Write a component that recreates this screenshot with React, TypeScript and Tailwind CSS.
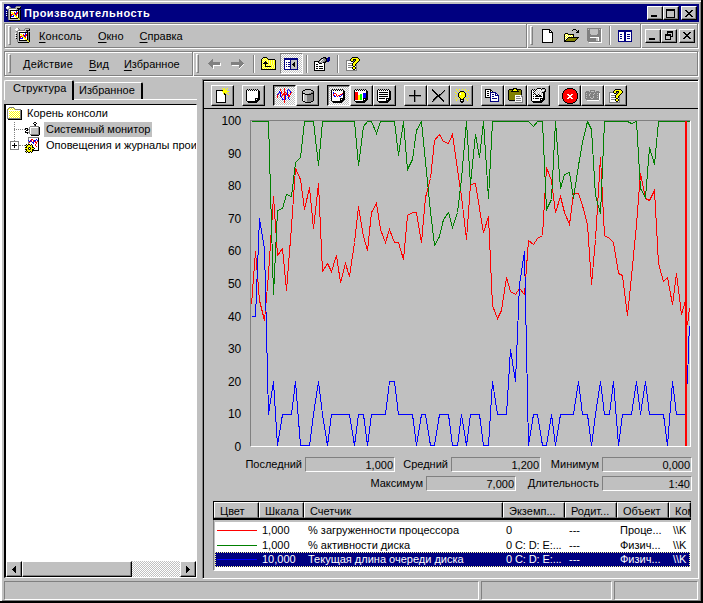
import type { ReactNode } from "react";

const colors: Record<string, string> = {
  K: "#000000",
  W: "#ffffff",
  L: "#c0c0c0",
  G: "#808080",
  Y: "#ffff00",
  y: "#ffff99",
  O: "#808000",
  R: "#ff0000",
  B: "#0000ff",
  N: "#000080",
  E: "#00ff00",
};

// 16-colour bitmap icons, one character per pixel
const icons = {
  console: [
    ".WWG......GGGGG",
    "WWWLG....GLLLLK",
    "LWLGGGGGGGLKKKK",
    ".GGWWWWWWWLGK..",
    "..GLKKKKKKKKKGK",
    "W.GLKWWWWWBWKGK",
    ".KGLKYYWRWBRKGK",
    "W.GLKWYYRBRRKGK",
    ".KGLKRRYYBRWKGK",
    "W.GLKRWBYYRWKGK",
    ".KGLKBBBWYYWKGK",
    "..GLKWWWWWYYKGK",
    "..GLKKKKKKKKYGK",
    "..GLLLLLLLLLLYK",
    "...KKKKKKKKKKK.",
  ],
  monitor: [
    ".........KK.....",
    "........KWWK....",
    ".........KK.....",
    ".........GK.....",
    ".....GGGGGGGGG..",
    "....GWWWWWWWWGK.",
    "KKK.GWLLLLLLLGK.",
    "K.KGGWLLLLLLLGK.",
    ".KK.GWLLLLLLLGK.",
    "K...GWLLLLLLLGK.",
    "KKKGGWLLLLLLLGK.",
    "..K.GWLLLLLLLGK.",
    ".....GGGGGGGGGK.",
    "......KKKKKKKK..",
  ],
  alerts: [
    "...GGGGGGGGGGG",
    "...GWWWWWWWWWK",
    "...GWWRRWWWBWK",
    "...BWBRWRBBWBK",
    "...GBRBWRBRWRK",
    "...GRWWBBWRRWK",
    "...GWWWWBWWRWK",
    ".K.KKWKWWWRWWK",
    "KYKYYKYKWWRWWK",
    ".KYYYYYKWWWRWK",
    "KKYOKOYKKWWWWK",
    "YYYKWKYYYKWWWK",
    "KKYOKOYKKWWWWK",
    ".KYYYYYKKKKKKK",
    "KYKYYKYK......",
    ".K.KK.K.......",
  ],
  folder: [
    "..GGGGG........",
    ".GYWYWYG.......",
    "GYWYWYWYGGGGGG.",
    "GWWWWWWWWWWWWGK",
    "GWYWYWYWYWYWYGK",
    "GWWYWYWYWYWYWGK",
    "GWYWYWYWYWYWYGK",
    "GWWYWYWYWYWYWGK",
    "GWYWYWYWYWYWYGK",
    "GWWYWYWYWYWYWGK",
    "GWYWYWYWYWYWYGK",
    "GGGGGGGGGGGGGGK",
    ".KKKKKKKKKKKKKK",
  ],
  blank: [
    "KKKKKKKK...",
    "KWWWWWWKK..",
    "KWWWWWWKWK.",
    "KWWWWWWKKKK",
    "KWWWWWWWWWK",
    "KWWWWWWWWWK",
    "KWWWWWWWWWK",
    "KWWWWWWWWWK",
    "KWWWWWWWWWK",
    "KWWWWWWWWWK",
    "KWWWWWWWWWK",
    "KWWWWWWWWWK",
    "KWWWWWWWWWK",
    "KKKKKKKKKKK",
  ],
  open: [
    ".........KKK...",
    "........K...K.K",
    ".............KK",
    "............KKK",
    ".KKK...........",
    "KYWYKKKKKK.....",
    "KWYWYWYWYK.....",
    "KYWYWYWYWK.....",
    "KWYWKKKKKKKKKKK",
    "KYWKOOOOOOOOOK.",
    "KWKOOOOOOOOOK..",
    "KKOOOOOOOOOK...",
    "KKKKKKKKKKK....",
  ],
  save: [
    "GGGGGGGGGGGGGG.",
    "GLGLLLLLLLLGLGW",
    "GGGLLLLLLLLGGGW",
    "GGGLLLLLLLLGGGW",
    "GGGLLLLLLLLGGGW",
    "GGGLLLLLLLLGGGW",
    "GGGGLLLLLLGGGGW",
    "GGGGGGGGGGGGGGW",
    "GGGGGGGGGGGGGGW",
    "GGGWWWWWWWWWGGW",
    "GGGGGGGGGLLWGGW",
    "GGGGGGGGGLLWGGW",
    "GGGGGGGGGLLWGGW",
    ".GGGGGGGGGGGGGW",
    "..WWWWWWWWWWWWW",
  ],
  tree: [
    "NNNNNNNNNNNNNN",
    "NNNNNNNNNNNNNN",
    "NWWWWWNNWWWWWN",
    "NWWWWWNNWWWWWN",
    "NWNNWWNNWNNNWN",
    "NWWWWWNNWWWWWN",
    "NWNNWWNNWNNNWN",
    "NWWWWWNNWWWWWN",
    "NWNNWWNNWNNNWN",
    "NWWWWWNNWWWWWN",
    "NWWWWWNNWWWWWN",
    "NNNNNNNNNNNNNN",
  ],
  back: [
    "....G........",
    "...GG........",
    "..GGG........",
    ".GGGGGGGGGGG.",
    "GGGGGGGGGGGGW",
    ".GGGGGGGGGGGW",
    "..GGGWWWWWWWW",
    "...GGW.......",
    "....GW.......",
    ".....W.......",
  ],
  forward: [
    "........G....",
    "........GG...",
    "........GGG..",
    "GGGGGGGGGGGG.",
    "GGGGGGGGGGGGG",
    "GGGGGGGGGGGGW",
    ".WWWWWWWGGGW.",
    "........GGW..",
    "........GW...",
    "........W....",
  ],
  up: [
    "..KKKK.........",
    ".KyYyYK........",
    "KyYyYyYKKKKKKK.",
    "KYyYyYyYyYyYyYK",
    "KyYyKYyYyYyYyYK",
    "KYyKKKyYyYyYyYK",
    "KyKKKKKYyYyYyYK",
    "KYyYKYyYyYyYyYK",
    "KyYyKyYyYyYyYyK",
    "KYyYKKKKKKYyYyK",
    "KyYyYyYyYyYyYyK",
    "KYyYyYyYyYyYyYK",
    "KKKKKKKKKKKKKKK",
  ],
  toggle: [
    "NNNNNNNNNNNNNN",
    "NNNNNNNNNNNNNN",
    "NWWWWWNLLLLLLN",
    "NWWWWWNLLLLLLN",
    "NWNWNNNLLLKLLN",
    "NWWWWWNLLKKLLN",
    "NWNWNNNLKKKLLN",
    "NWWWWWNLLKKLLN",
    "NWNWNNNLLLKLLN",
    "NWWWWWNLLLLLLN",
    "NWWWWWNLLLLLLN",
    "NNNNNNNNNNNNNN",
  ],
  props: [
    ".........KKK..NN",
    ".......KKGGKKNNN",
    "......KGWGGGKBNN",
    ".....KGWGLGGKNNN",
    "KKKKKGWGLGGKKNN.",
    "KWWWKGGLGKKK....",
    "KWWWWKKKWWK.....",
    "KWKKWWWWWWK.....",
    "KWWWWWWWWWK.....",
    "KWKKWKKKKWK.....",
    "KWWWWWWWWWK.....",
    "KWKKWKKKKWK.....",
    "KWWWWWWWWWK.....",
    "KKKKKKKKKKK.....",
  ],
  help: [
    "......KKKKKK..",
    ".....KYYYYYYK.",
    "....KYYKKKYYYK",
    "GGGGKYYKGKYYYK",
    "GWWWWKKGKYYYK.",
    "GWWWWWWKYYYK..",
    "GWGGGGKYYYK...",
    "GWWWWWKYYKG...",
    "GWGGGGKYYKG...",
    "GWWWWWWKKWG...",
    "GWGGGGKYYKG...",
    "GWWWWWKYYKG...",
    "GWWWWWWKKWG...",
    "GGGGGGGGGGG...",
  ],
  newSet: [
    "......Y.Y..Y.",
    ".......YY.Y..",
    "KKKKKKKYYYY..",
    "KWWWWWYYYYYYY",
    "KWWWWWWYYYY..",
    "KWWWWWWYKY.Y.",
    "KWWWWWWWKK..Y",
    "KWWWWWWWWK...",
    "KWWWWWWWWK...",
    "KWWWWWWWWK...",
    "KWWWWWWWWK...",
    "KWWWWWWWWK...",
    "KWWWWWWWWK...",
    "KWWWWWWWWK...",
    "KKKKKKKKKK...",
  ],
  clear: [
    ".K.K.K.K.K.K...",
    "KWKWKWKWKWKWK..",
    "KWWWWWWWWWWWKK.",
    "KWWWWWWWWWWWKK.",
    "KWWWWWWWWWWWKK.",
    "KWWWWWWWWWWWKK.",
    "KWWWWWWWWWWWKK.",
    "KWWWWWWWWWWWKK.",
    "KWWWWWWWWWWWKK.",
    "KWWWWWWWWKKKKK.",
    "KWWWWWWWWKWKKK.",
    "KWWWWWWWWKKKK..",
    ".KKKKKKKKKKK...",
    "..KKKKKKKKK....",
  ],
  current: [
    ".......R.......",
    "...R...R...B...",
    "...R...R..B.B..",
    "..B.R..R..B..B.",
    "..BBR..RR.B..BR",
    ".B.BR.RR.RB..R.",
    "BR.B.RRRRRBR.R.",
    "R..B.R.RB.BRR..",
    "R..BR..RB..RR..",
    "R...B..RB..B...",
    ".....B.RB..B...",
    ".....BBRB...B..",
    ".......R.......",
    ".......R.......",
    ".......R.......",
  ],
  logData: [
    "...KKKKKK...",
    ".KKLLLLLLKK.",
    "KLLLLLLLLLGK",
    "KLLLLLLLLGGK",
    "KKKLLLLGGKKK",
    "KWLKKKKKKGGK",
    "KWLLLGGGGGGK",
    "KWLLLGGGGGGK",
    "KWLLLGGGGGGK",
    "KWLLLGGGGGGK",
    "KWLLLGGGGGGK",
    "KWLLLGGGGGGK",
    ".KKLLGGGGKK.",
    "...KKKKKK...",
  ],
  graph: [
    ".K.K.K.K.K.K...",
    "KWKWKWKWKWKWK..",
    "KWWWWWWWWWWWKK.",
    "KWBWWWWWWWWWKK.",
    "KWBRRWWWWWWRKK.",
    "KWRWWRWWWRRBKK.",
    "KWRBWRWRRWBWKK.",
    "KWWBBWRWBBWWKK.",
    "KWWWWWWWWWWWKK.",
    "KWWWWWWWWKKKKK.",
    "KWWWWWWWWKWKKK.",
    "KWWWWWWWWKKKK..",
    ".KKKKKKKKKKK...",
    "..KKKKKKKKK....",
  ],
  histogram: [
    ".K.K.K.K.K.K...",
    "KWKWKWKWKWKWK..",
    "KWWWWWWWWWWWKK.",
    "KRRRWWWWWWWWKK.",
    "KRRRWWWWWBBBKK.",
    "KRRRWWEEWBBBKK.",
    "KRRRYYEEWBBBKK.",
    "KRRRYYEEWBBBKK.",
    "KRRRYYEEWBBBKK.",
    "KRRRYYEEWKKKKK.",
    "KRRRYYEEWKWKKK.",
    "KWWWWWWWWKKKK..",
    ".KKKKKKKKKKK...",
    "..KKKKKKKKK....",
  ],
  report: [
    ".K.K.K.K.K.K...",
    "KWKWKWKWKWKWK..",
    "KWWWWWWWWWWWKK.",
    "KWKKKKKKKKKWKK.",
    "KWWWWWWWWWWWKK.",
    "KWKKKKKKKKKWKK.",
    "KWWWWWWWWWWWKK.",
    "KWKKKKKKKKKWKK.",
    "KWWWWWWWWWWWKK.",
    "KWKKKKKKWKKKKK.",
    "KWWWWWWWWKWKKK.",
    "KWWWWWWWWKKKK..",
    ".KKKKKKKKKKK...",
    "..KKKKKKKKK....",
  ],
  add: [
    ".....KG......",
    ".....KG......",
    ".....KG......",
    ".....KG......",
    ".....KG......",
    "KKKKKKKKKKKK.",
    "GGGGGKGGGGGG.",
    ".....KG......",
    ".....KG......",
    ".....KG......",
    ".....KG......",
    ".....KG......",
  ],
  remove: [
    "K............",
    "KK..........K",
    ".KK........KG",
    "..KK......KG.",
    "...KK....KG..",
    "....KK.KKG...",
    ".....KKKG....",
    "....KKKK.....",
    "...KKG.KK....",
    "..KKG...KK...",
    ".KKG.....KK..",
    ".KG.......KK.",
    "KG.........K.",
  ],
  highlight: [
    ".Y..Y..Y..Y...",
    "..Y.......Y..Y",
    "...Y.KKKK..Y..",
    "Y...KYYYYK....",
    ".Y.KYWYYYYK.Y.",
    "...KYWYYYYK..Y",
    "Y..KYYYYYYK...",
    "...KYYYYYYK.Y.",
    ".Y..KYYYYK....",
    "Y...YKYYK.Y..Y",
    "..Y..KKKK..Y..",
    ".Y...KWLK...Y.",
    ".....KKKK.....",
    "......KK......",
  ],
  copy: [
    "KKKKKK.........",
    "KWWWWKK........",
    "KWKKWKWK.......",
    "KWWWWNNNNNN....",
    "KWKKWNWWWWNN...",
    "KWWWWNWNNWNWN..",
    "KWKKWNWWWWNNNN.",
    "KWWWWNWNNWWWWN.",
    "KKKKKNWWWWWWWN.",
    ".....NWNNNNNWN.",
    ".....NWWWWWWWN.",
    ".....NWWWWWWWN.",
    ".....NNNNNNNNN.",
  ],
  paste: [
    ".....KKKK......",
    ".KKKKKYYKKKKK..",
    "KOOOKYYYYKOOOK.",
    "KOOKKKKKKKKOOK.",
    "KOOOOOOOOOOOOK.",
    "KOOOOOOOOOOOOK.",
    "KOOOOOOOOOOOOK.",
    "KOOOOOOWWWWWWG.",
    "KOOOOOOWGGGGWGG",
    "KOOOOOOWWWWWWWG",
    "KOOOOOOWGGGGGWG",
    "KOOOOOOWWWWWWWG",
    ".KKKKKKWGGGGGWG",
    ".......WWWWWWWG",
    ".......GGGGGGGG",
  ],
  properties: [
    "......KKKK.KKK.",
    ".K.K.KWWWWKLLLK",
    "KWKWKWLWLWLWWLK",
    "KWWKWLWLWLWLLKK",
    "KWKWLWLWLWLKKK.",
    "KWWKLWLWLWLWKK.",
    "KWKWKLWKLWLWKK.",
    "KWWWWKKWKKWWKK.",
    "KWKWKKKKKKKWKK.",
    "KWWWWWWWWWWWKK.",
    "KWKWKKKKWKKKKK.",
    "KWWWWWWWWKWKKK.",
    "KWWWWWWWWKKKK..",
    ".KKKKKKKKKKK...",
    "..KKKKKKKKK....",
  ],
  stop: [
    ".....KKKKKK.....",
    "...KKRRRRRRKK...",
    "..KRRRRRRRRRRK..",
    ".KRRRRRRRRRRRRK.",
    ".KRRRRRRRRRRRRK.",
    "KRRRRRRRRRRRRRRK",
    "KRRRRWWRRWWRRRRK",
    "KRRRRRWWWWRRRRRK",
    "KRRRRRRWWRRRRRRK",
    "KRRRRRWWWWRRRRRK",
    "KRRRRWWRRWWRRRRK",
    ".KRRRRRRRRRRRRK.",
    ".KRRRRRRRRRRRRK.",
    "..KRRRRRRRRRRK..",
    "...KKRRRRRRKK...",
    ".....KKKKKK.....",
  ],
  camera: [
    ".....GGGGG.....",
    ".GGG.GLLLG.GGG.",
    "GGGGGGGGGGGGGGG",
    "GLGGGLGGGLGGLGW",
    "GGGGLGGGLGGGGGW",
    "GLGGLGGGGGGGLGW",
    "GGGGGGGGLGGGGGW",
    "GLGGGLGGLGGGLGW",
    "GGGGGGLLGGGGGGW",
    ".GGGGGGGGGGGGGW",
    "..WWWWWWWWWWWW.",
  ],
  minimize: [".......", ".......", ".......", ".......", ".......", ".......", "KKKKKK.", "KKKKKK."],
  maximize: [
    "KKKKKKKKK",
    "KKKKKKKKK",
    "K.......K",
    "K.......K",
    "K.......K",
    "K.......K",
    "K.......K",
    "K.......K",
    "KKKKKKKKK",
  ],
  restore: [
    "..KKKKKK",
    "..KKKKKK",
    "..K....K",
    "KKKKKK.K",
    "KKKKKK.K",
    "K....KKK",
    "K....K..",
    "K....K..",
    "KKKKKK..",
  ],
  close: [
    "KK....KK",
    ".KK..KK.",
    "..KKKK..",
    "...KK...",
    "..KKKK..",
    ".KK..KK.",
    "KK....KK",
  ],
  left: ["...K", "..KK", ".KKK", "KKKK", ".KKK", "..KK", "...K"],
  right: ["K...", "KK..", "KKK.", "KKKK", "KKK.", "KK..", "K..."],
  plus: [
    "GGGGGGGGG",
    "GWWWWWWWG",
    "GWWWKWWWG",
    "GWWWKWWWG",
    "GWKKKKKWG",
    "GWWWKWWWG",
    "GWWWKWWWG",
    "GWWWWWWWG",
    "GGGGGGGGG",
  ],
};

type IconName = keyof typeof icons;

function Icon({ name, className = "" }: { name: IconName; className?: string }) {
  const rows = icons[name];
  const width = rows[0].length;
  return (
    <svg
      width={width}
      height={rows.length}
      viewBox={`0 0 ${width} ${rows.length}`}
      shapeRendering="crispEdges"
      className={`shrink-0 ${className}`}
    >
      {rows.flatMap((row, y) =>
        [...row].map((c, x) =>
          c === "." ? null : <rect key={`${x}-${y}`} x={x} y={y} width={1} height={1} fill={colors[c]} />
        )
      )}
    </svg>
  );
}

const red = [
  43.7, 60, 45, 38.7, 53, 76.8, 58.6, 60.9, 47.9, 67.6, 85.4, 82.1, 72.9, 79.6, 66.9, 80.9, 53.8, 56.2, 53.8, 58.8,
  50.4, 56.2, 52.3, 62.8, 73.7, 64.5, 60.3, 72, 74.7, 66.6, 62.8, 66.8, 62.8, 62.7, 57.6, 70.9, 71.9, 71.9, 62.8, 76.6,
  82.4, 94, 95.9, 93.7, 93, 95.9, 85, 76.8, 63.5, 80.4, 80.8, 73.2, 65.9, 70.7, 43.3, 39.4, 42, 52.1, 47.8, 46.8,
  48.6, 46.9, 63.3, 62, 64, 64.9, 85.8, 81.9, 71.9, 76.8, 71.9, 68.1, 77.8, 77.8, 74, 68.1, 49.9, 63.5, 88.9, 64.9,
  64.1, 62.8, 53.1, 52.5, 40.2, 52.3, 68.1, 84, 76.2, 75.7, 78.7, 56.4, 50.8, 52, 43.7, 53.1, 40.5, 45,
];

const green = [
  100, 100, 100, 100, 100, 46.8, 72.5, 73.2, 77.5, 76.8, 87.4, 88.8, 100, 100, 100, 86.2, 100, 100, 100, 100,
  100, 100, 100, 100, 86.4, 98.3, 100, 100, 96.2, 100, 100, 100, 100, 89.5, 100, 85.2, 88.3, 97, 100, 87.6,
  72.2, 61.7, 64.7, 69.9, 71.9, 67.4, 71.9, 82.4, 100, 80.4, 96, 88.9, 100, 76.3, 100, 100, 100, 100, 100, 100,
  100, 100, 100, 98.2, 100, 100, 72.7, 75.8, 100, 79.4, 83.6, 84.3, 76.3, 86.2, 93.4, 100, 97.3, 77.3, 71.7, 100,
  100, 100, 100, 100, 100, 99.3, 100, 79.4, 76.5, 91.8, 86.7, 100, 100, 100, 100, 100, 100, 100, 100,
];

const blue = [
  40, 40, 70, 61, 10, 20, 0, 10, 10, 10, 20, 0, 0, 0, 10, 20, 10, 0, 10, 10,
  10, 10, 10, 0, 10, 10, 0, 10, 10, 10, 10, 20, 20, 10, 10, 10, 10, 0, 10, 10,
  0, 0, 10, 10, 10, 0, 0, 10, 0, 10, 10, 10, 0, 0, 20, 10, 10, 10, 30, 20,
  50, 60, 0, 10, 10, 0, 0, 10, 0, 10, 10, 10, 10, 20, 10, 10, 0, 10, 20, 10,
  10, 20, 0, 10, 10, 10, 20, 10, 20, 10, 10, 10, 10, 0, 20, 10, 10, 10,
];

const toPoints = (values: number[]) =>
  values
    .map((v, i) => `${Math.floor(i * 4.48) + 0.5},${Math.min(324, Math.floor(326 - v * 3.26)) + 0.5}`)
    .join(" ");

function Chart() {
  return (
    <div className="flex h-[344px] pt-[7px]">
      <div className="relative -top-[4px] mr-[9px] flex h-[336px] w-[37px] flex-col justify-between text-right text-[12px] leading-[10px] tracking-[-0.2px]">
        {[100, 90, 80, 70, 60, 50, 40, 30, 20, 10, 0].map((n) => (
          <span key={n}>{n}</span>
        ))}
      </div>
      <div className="h-[327px] w-[441px] border border-t-[#808080] border-r-white border-b-white border-l-[#808080]">
        <svg width="439" height="325" shapeRendering="crispEdges" fill="none" className="block">
          <polyline points={toPoints(red)} stroke="#ff0000" />
          <polyline points="436.5,204.5 438.5,187" stroke="#ff0000" />
          <polyline points={toPoints(green)} stroke="#008000" />
          <polyline points={toPoints(blue)} stroke="#0000ff" />
          <polyline points="436.5,263 437.5,225 438.5,205" stroke="#0000ff" />
          <rect x="434" y="0" width="2" height="325" fill="#ff0000" />
        </svg>
      </div>
    </div>
  );
}

function CaptionButton({ icon, className = "" }: { icon: IconName; className?: string }) {
  return (
    <div
      className={`flex h-[14px] w-4 items-center justify-center border border-t-white border-r-black border-b-black border-l-white bg-[#c0c0c0] shadow-[inset_-1px_-1px_0_#808080] ${className}`}
    >
      <Icon name={icon} className="-ml-px" />
    </div>
  );
}

function ToolButton({ icon, pressed = false }: { icon: IconName; pressed?: boolean }) {
  return (
    <div
      className={
        pressed
          ? "flex h-[21px] w-[23px] items-center justify-center border border-t-black border-r-white border-b-white border-l-black bg-[repeating-conic-gradient(#fff_0_25%,#c0c0c0_0_50%)] bg-[length:2px_2px] shadow-[inset_1px_1px_0_#808080]"
          : "flex h-[21px] w-[23px] items-center justify-center border border-t-white border-r-black border-b-black border-l-white shadow-[inset_-1px_-1px_0_#808080]"
      }
    >
      <Icon name={icon} />
    </div>
  );
}

const toolGroups: { icon: IconName; pressed?: boolean }[][] = [
  [{ icon: "newSet" }],
  [{ icon: "clear" }],
  [{ icon: "current", pressed: true }, { icon: "logData" }],
  [{ icon: "graph", pressed: true }, { icon: "histogram" }, { icon: "report" }],
  [{ icon: "add" }, { icon: "remove" }, { icon: "highlight" }],
  [{ icon: "copy" }, { icon: "paste" }, { icon: "properties" }],
  [{ icon: "stop" }, { icon: "camera" }, { icon: "help" }],
];

const Grip = () => (
  <div className="h-[19px] w-[3px] shrink-0 border border-t-white border-r-[#808080] border-b-[#808080] border-l-white" />
);

const Divider = ({ className = "" }: { className?: string }) => (
  <div className={`w-[2px] shrink-0 border-l border-r border-l-[#808080] border-r-white ${className}`} />
);

const MenuItem = ({ children, className = "" }: { children: string; className?: string }) => (
  <span className={`pt-px whitespace-nowrap ${className}`}>
    <u className="underline-offset-2">{children[0]}</u>
    {children.slice(1)}
  </span>
);

function Band({ children, className = "" }: { children: ReactNode; className?: string }) {
  return (
    <div
      className={`mr-px flex h-[25px] items-center border border-[#808080] shadow-[inset_1px_1px_0_#fff,1px_1px_0_#fff] ${className}`}
    >
      {children}
    </div>
  );
}

function Value({ label, value, className = "" }: { label: string; value: string; className?: string }) {
  return (
    <div className={`flex items-center justify-end ${className}`}>
      <span className="mr-[3px] whitespace-nowrap">{label}</span>
      <span className="h-[15px] w-[90px] border border-t-[#808080] border-r-white border-b-white border-l-[#808080] pr-px text-right leading-[14px]">
        {value}
      </span>
    </div>
  );
}

const headers = [
  { label: "Цвет", width: "w-[45px]" },
  { label: "Шкала", width: "w-[45px]" },
  { label: "Счетчик", width: "w-[199px]" },
  { label: "Экземп...", width: "w-[62px]" },
  { label: "Родит...", width: "w-[52px]" },
  { label: "Объект", width: "w-[52px]" },
  { label: "Ком", width: "w-[22px]" },
];

const counters = [
  { line: "bg-[#ff0000]", scale: "1,000", name: "% загруженности процессора", instance: "0", object: "Проце..." },
  { line: "bg-[#008000]", scale: "1,000", name: "% активности диска", instance: "0 C: D: E:...", object: "Физич..." },
  {
    line: "bg-[#0000ff]",
    scale: "10,000",
    name: "Текущая длина очереди диска",
    instance: "0 C: D: E:...",
    object: "Физич...",
    selected: true,
  },
];

function CounterTable() {
  return (
    <div className="ml-[9px] w-[478px]">
      <div className="flex h-[19px] overflow-hidden border-t border-b-2 border-l border-black">
        {headers.map((h) => (
          <div
            key={h.label}
            className={`h-4 shrink-0 overflow-hidden border border-t-white border-r-black border-b-[#808080] border-l-white pl-[5px] leading-[16px] whitespace-nowrap shadow-[inset_-1px_0_0_#808080] ${h.width}`}
          >
            {h.label}
          </div>
        ))}
      </div>
      <div className="h-[51px] overflow-hidden border-r border-b border-l border-r-white border-b-white border-l-[#808080] bg-[#c0c0c0] pt-[2px] pl-px">
        <div className="h-[48px] overflow-hidden bg-white">
          {counters.map((c) => (
            <div
              key={c.name}
              className={`flex h-[15px] items-center whitespace-nowrap ${
                c.selected
                  ? "border border-dotted border-[#ffff99] bg-[#000080] pl-px leading-[17px] text-white"
                  : "pt-[2px] pl-[2px] leading-[15px]"
              }`}
            >
              <span className={`h-px w-[40px] shrink-0 ${c.line}`} />
              <span className="ml-[5px] w-[46px] shrink-0">{c.scale}</span>
              <span className="w-[198px] shrink-0">{c.name}</span>
              <span className="w-[63px] shrink-0 tracking-[-0.1px]">{c.instance}</span>
              <span className="w-[51px] shrink-0">---</span>
              <span className="w-[53px] shrink-0">{c.object}</span>
              <span>\\K</span>
            </div>
          ))}
        </div>
      </div>
    </div>
  );
}

function TreePane() {
  return (
    <div className="w-[193px] shrink-0 pt-px">
      <div className="flex h-[19px] items-end">
        <div className="relative top-px h-[20px] w-[70px] rounded-t-[2px] border-t border-r-2 border-l border-t-white border-r-black border-l-white bg-[#c0c0c0] pl-[8px] leading-[14px] tracking-[0.15px]">
          Структура
        </div>
        <div className="h-[17px] w-[69px] rounded-t-[2px] border-t border-r-2 border-t-white border-r-black pl-[5px] leading-[14px]">
          Избранное
        </div>
      </div>
      <div className="ml-[70px] h-px bg-white" />
      <div className="mt-[4px] flex h-[474px] flex-col justify-between border-t border-r border-b border-l-2 border-t-black border-r-white border-b-white border-l-black bg-white">
        <div className="relative overflow-hidden pl-px whitespace-nowrap">
          <div className="absolute top-[17px] left-[8px] h-[25px] border-l border-dotted border-[#808080]" />
          <div className="flex h-4 items-center">
            <Icon name="folder" />
            <span className="ml-[5px]">Корень консоли</span>
          </div>
          <div className="flex h-4 items-center">
            <div className="ml-[7px] w-[11px] border-t border-dotted border-[#808080]" />
            <Icon name="monitor" />
            <span className="ml-[3px] h-[15px] bg-[#c0c0c0] px-[2px] leading-[15px]">Системный монитор</span>
          </div>
          <div className="flex h-4 items-center">
            <Icon name="plus" className="relative ml-[3px]" />
            <div className="w-[6px] shrink-0 border-t border-dotted border-[#808080]" />
            <Icon name="alerts" />
            <span className="ml-[7px]">Оповещения и журналы прои</span>
          </div>
        </div>
        <div className="flex h-4 bg-[repeating-conic-gradient(#fff_0_25%,#c0c0c0_0_50%)] bg-[length:2px_2px]">
          <div className="flex w-4 items-center justify-center border border-t-white border-r-black border-b-black border-l-white bg-[#c0c0c0] shadow-[inset_-1px_-1px_0_#808080]">
            <Icon name="left" />
          </div>
          <div className="w-[110px] border border-t-white border-r-black border-b-black border-l-white bg-[#c0c0c0] shadow-[inset_-1px_-1px_0_#808080]" />
          <div className="ml-auto flex w-4 items-center justify-center border border-t-white border-r-black border-b-black border-l-white bg-[#c0c0c0] shadow-[inset_-1px_-1px_0_#808080]">
            <Icon name="right" />
          </div>
        </div>
      </div>
    </div>
  );
}

function MonitorPane() {
  return (
    <div className="ml-[5px] h-[500px] w-[497px] overflow-hidden border-t border-r border-b border-l border-t-[#808080] border-r-white border-b-white border-l-[#808080]">
      <div className="h-[498px] border-t border-l border-black">
        <div className="flex h-[28px] gap-[8px] border-t border-b border-t-white border-b-black pt-[3px] pl-[7px]">
          {toolGroups.map((group, i) => (
            <div key={i} className="flex">
              {group.map((tool) => (
                <ToolButton key={tool.icon} {...tool} />
              ))}
            </div>
          ))}
        </div>
        <div className="h-[4px]" />
        <Chart />
        <div className="mr-[6px] flex justify-end">
          <Value label="Последний" value="1,000" />
          <Value label="Средний" value="1,200" className="w-[146px]" />
          <Value label="Минимум" value="0,000" className="w-[151px]" />
        </div>
        <div className="mt-[4px] mr-[6px] flex justify-end">
          <Value label="Максимум" value="7,000" />
          <Value label="Длительность" value="1:40" className="w-[176px]" />
        </div>
        <div className="h-[10px]" />
        <CounterTable />
      </div>
    </div>
  );
}

export default function App() {
  return (
    <div className="h-[603px] w-[703px] overflow-hidden border-r-2 border-b-2 border-black bg-[#c0c0c0] pt-[4px] pl-[4px] font-['Liberation_Sans',Arial,sans-serif] text-[11px] leading-[15px] text-black shadow-[inset_0_1px_0_#c0c0c0,inset_2px_2px_0_#fff,inset_-1px_-1px_0_#808080]">
      <div className="flex h-[18px] w-[695px] items-center bg-[#000080] pr-[2px] pl-[2px]">
        <Icon name="console" />
        <span className="ml-[3px] font-bold tracking-[0.5px] text-white">Производительность</span>
        <CaptionButton icon="minimize" className="ml-auto" />
        <CaptionButton icon="maximize" />
        <CaptionButton icon="close" className="ml-[2px]" />
      </div>

      <Band className="mt-px w-[694px]">
        <div className="w-[3px]" />
        <Grip />
        <Icon name="console" className="ml-[4px]" />
        <MenuItem className="ml-[9px] tracking-[0.1px]">Консоль</MenuItem>
        <MenuItem className="ml-[16px]">Окно</MenuItem>
        <MenuItem className="ml-[16px]">Справка</MenuItem>
        <Divider className="ml-auto h-[24px]" />
        <div className="w-[2px]" />
        <Grip />
        <Icon name="blank" className="ml-[9px]" />
        <Icon name="open" className="ml-[11px]" />
        <Icon name="save" className="ml-[8px]" />
        <Divider className="ml-[7px] h-[19px]" />
        <Icon name="tree" className="ml-[7px]" />
        <Divider className="ml-[8px] h-[24px]" />
        <CaptionButton icon="minimize" className="ml-[3px]" />
        <CaptionButton icon="restore" />
        <CaptionButton icon="close" className="mr-[2px] ml-[2px]" />
      </Band>

      <Band className="mt-[3px] w-[694px]">
        <div className="w-[3px]" />
        <Grip />
        <MenuItem className="ml-[12px] tracking-[0.2px]">Действие</MenuItem>
        <MenuItem className="ml-[16px]">Вид</MenuItem>
        <MenuItem className="ml-[15px]">Избранное</MenuItem>
        <Divider className="ml-[12px] h-[24px]" />
        <div className="w-[2px]" />
        <Grip />
        <Icon name="back" className="ml-[9px]" />
        <Icon name="forward" className="ml-[10px]" />
        <Divider className="ml-[9px] h-[18px]" />
        <Icon name="up" className="ml-[6px]" />
        <div className="ml-[4px] flex h-[21px] w-[23px] items-center justify-center border border-t-[#808080] border-r-white border-b-white border-l-[#808080] bg-[repeating-conic-gradient(#fff_0_25%,#c0c0c0_0_50%)] bg-[length:2px_2px]">
          <Icon name="toggle" />
        </div>
        <Divider className="ml-[3px] h-[18px]" />
        <Icon name="props" className="ml-[6px]" />
        <Divider className="ml-[7px] h-[18px]" />
        <Icon name="help" className="ml-[7px]" />
      </Band>

      <div className="mt-[3px] flex h-[500px]">
        <TreePane />
        <MonitorPane />
      </div>

      <div className="mt-[2px] flex h-[19px] gap-[2px]">
        <div className="w-[475px] border border-t-[#808080] border-r-white border-b-white border-l-[#808080]" />
        <div className="w-[131px] border border-t-[#808080] border-r-white border-b-white border-l-[#808080]" />
        <div className="w-[84px] border border-t-[#808080] border-r-white border-b-white border-l-[#808080]" />
      </div>
    </div>
  );
}
